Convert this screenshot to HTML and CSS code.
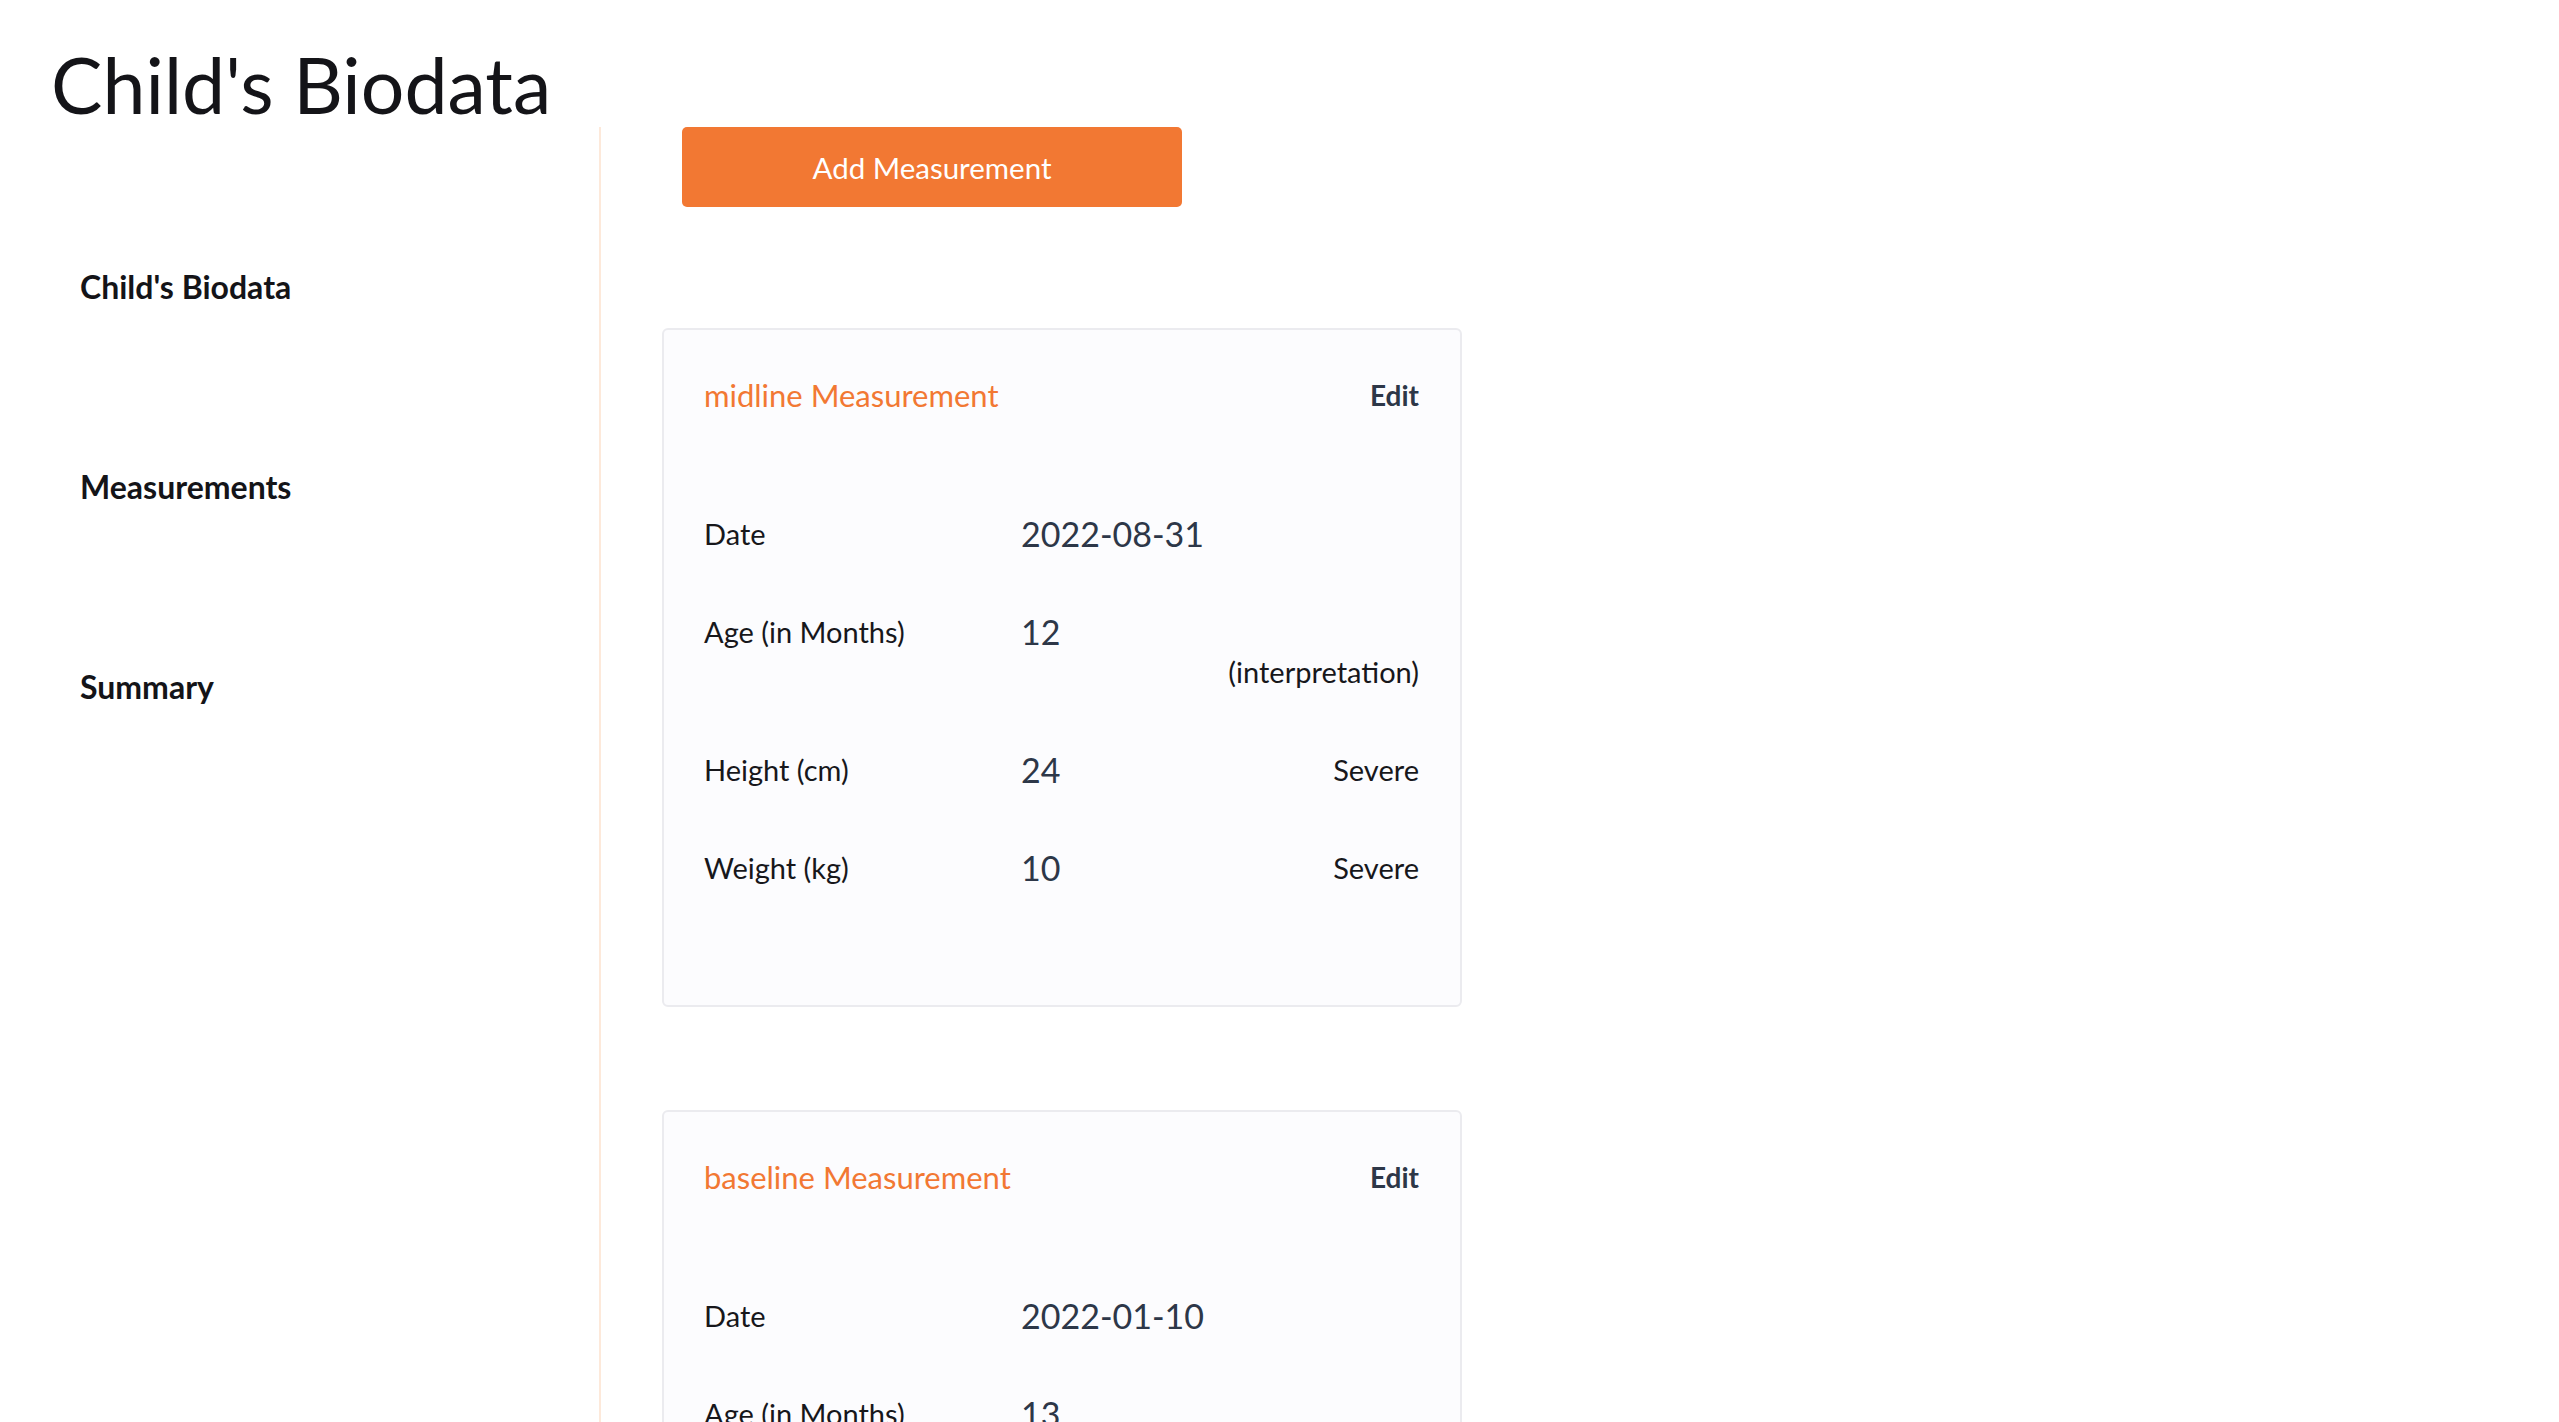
FILE: index.html
```html
<!DOCTYPE html>
<html lang="en">
<head>
<meta charset="utf-8">
<title>Child's Biodata</title>
<link rel="stylesheet" href="styles.css">
</head>
<body>
<div class="page">
  <h1 class="page-title">Child's Biodata</h1>
  <div class="layout">
    <nav class="sidebar">
      <a class="nav-item">Child's Biodata</a>
      <a class="nav-item">Measurements</a>
      <a class="nav-item">Summary</a>
    </nav>
    <main class="main">
      <button class="add-btn">Add Measurement</button>

      <section class="card">
        <div class="card-head">
          <span class="card-title">midline Measurement</span>
          <span class="edit">Edit</span>
        </div>
        <div class="rows">
          <div class="row"><span class="label">Date</span><span class="value">2022-08-31</span><span class="note"></span></div>
          <div class="row"><span class="label">Age (in Months)</span><span class="value">12</span><span class="note"></span><span class="note interp">(interpretation)</span></div>
          <div class="row"><span class="label">Height (cm)</span><span class="value">24</span><span class="note">Severe</span></div>
          <div class="row"><span class="label">Weight (kg)</span><span class="value">10</span><span class="note">Severe</span></div>
        </div>
      </section>

      <section class="card">
        <div class="card-head">
          <span class="card-title">baseline Measurement</span>
          <span class="edit">Edit</span>
        </div>
        <div class="rows">
          <div class="row"><span class="label">Date</span><span class="value">2022-01-10</span><span class="note"></span></div>
          <div class="row"><span class="label">Age (in Months)</span><span class="value">13</span><span class="note"></span><span class="note interp">(interpretation)</span></div>
          <div class="row"><span class="label">Height (cm)</span><span class="value">30</span><span class="note">Severe</span></div>
          <div class="row"><span class="label">Weight (kg)</span><span class="value">9</span><span class="note">Severe</span></div>
        </div>
      </section>
    </main>
  </div>
</div>
</body>
</html>
```

FILE: styles.css
```css
html, body {
  margin: 0;
  padding: 0;
  background: #ffffff;
}
body {
  font-family: Lato, "Open Sans", "Noto Sans", sans-serif;
  color: #17171b;
  height: 1422px;
  overflow: hidden;
}
.page {
  padding-left: 51px;
}
.page-title {
  margin: 0;
  padding-top: 46px;
  height: 127px;
  box-sizing: border-box;
  font-size: 77px;
  font-weight: 400;
  line-height: 77px;
  color: #141418;
  letter-spacing: 0;
}
.layout {
  display: flex;
  align-items: flex-start;
}
.sidebar {
  width: 550px;
  flex: none;
  border-right: 2px solid #fde9da;
  min-height: 1400px;
  padding-top: 140px;
  padding-left: 29px;
  box-sizing: border-box;
  display: flex;
  flex-direction: column;
  gap: 160px;
}
.nav-item {
  font-size: 32px;
  font-weight: 700;
  line-height: 40px;
  color: #141418;
}
.main {
  padding-left: 60px;
  display: flex;
  flex-direction: column;
  align-items: flex-start;
}
.add-btn {
  margin-left: 21px;
  width: 500px;
  height: 80px;
  border: none;
  border-radius: 5px;
  background: #f27833;
  color: #ffffff;
  font-family: Lato, "Open Sans", sans-serif;
  font-size: 29.5px;
  font-weight: 400;
  padding: 0;
  cursor: pointer;
}
.card {
  width: 800px;
  box-sizing: border-box;
  margin-top: 121px;
  margin-left: 1px;
  background: #fcfcfe;
  border: 2px solid #ebebef;
  border-radius: 6px;
  padding: 45px 40px 88px 40px;
}
.card + .card {
  margin-top: 103px;
}
.card-head {
  display: flex;
  justify-content: space-between;
  align-items: center;
  line-height: 40px;
}
.card-title {
  color: #f27833;
  font-size: 31px;
}
.edit {
  color: #2d3748;
  font-size: 28px;
  font-weight: 700;
  padding-right: 1px;
}
.rows {
  margin-top: 70px;
  display: flex;
  flex-direction: column;
}
.row {
  display: grid;
  grid-template-columns: 317px 1fr auto;
  align-items: center;
  padding: 29px 0;
  line-height: 40px;
}
.label {
  font-size: 29px;
  color: #17171b;
}
.value {
  font-size: 34px;
  color: #2d3748;
}
.note {
  font-size: 29px;
  color: #17171b;
  text-align: right;
  padding-right: 1px;
}
.interp {
  grid-column: 3;
}
```
